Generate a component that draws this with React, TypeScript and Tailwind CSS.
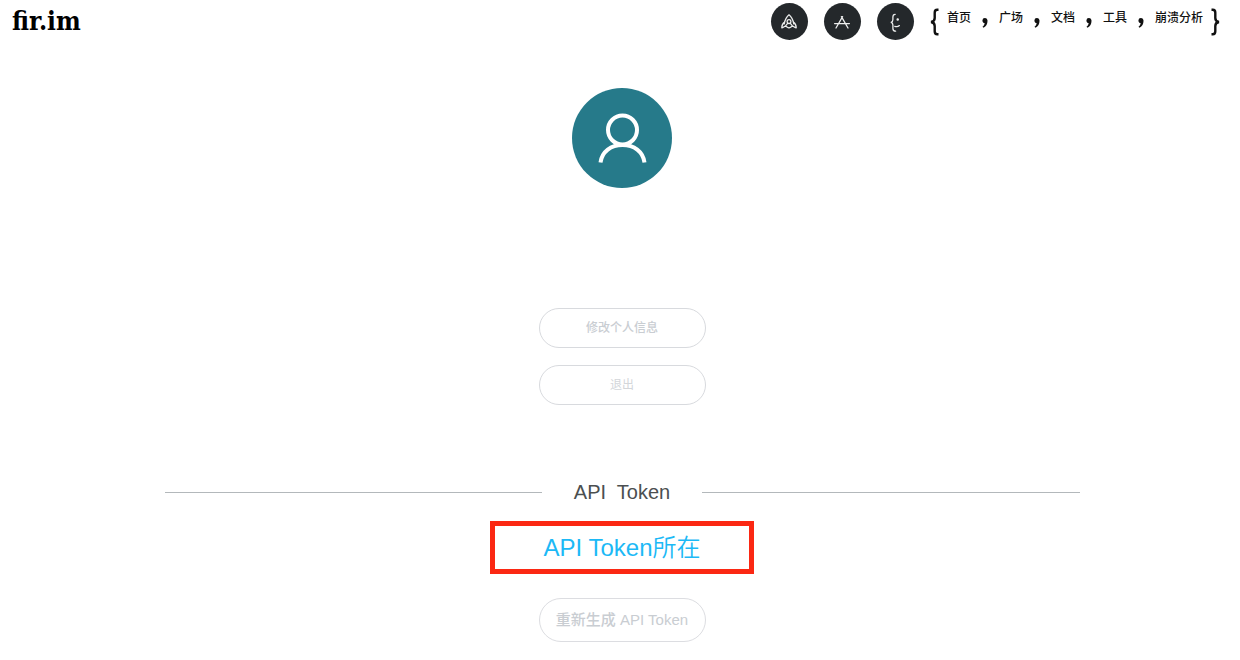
import { Fragment, type ReactNode } from "react";

const links = ["首页", "广场", "文档", "工具", "崩溃分析"];

function RoundLink({ label, children }: { label: string; children: ReactNode }) {
  return (
    <a
      href="#"
      aria-label={label}
      className="flex size-[37px] items-center justify-center rounded-full bg-[#24282b] text-[#eceded]"
    >
      <svg
        viewBox="0 0 20 20"
        className="size-5"
        fill="none"
        stroke="currentColor"
        strokeWidth="1.3"
        strokeLinecap="round"
        strokeLinejoin="round"
        aria-hidden="true"
      >
        {children}
      </svg>
    </a>
  );
}

function Brace({ flip = false }: { flip?: boolean }) {
  return (
    <svg viewBox="0 0 9 28" className="h-7 w-[9px]" fill="none" stroke="#111" strokeWidth="2.4" aria-hidden="true">
      {flip ? (
        <path d="M0.5 1.7H1.8Q4.3 1.7 4.3 4.7V10Q4.3 13.5 8 14Q4.3 14.5 4.3 18V23.3Q4.3 26.3 1.8 26.3H0.5" />
      ) : (
        <path d="M8.5 1.7H7.2Q4.7 1.7 4.7 4.7V10Q4.7 13.5 1 14Q4.7 14.5 4.7 18V23.3Q4.7 26.3 7.2 26.3H8.5" />
      )}
    </svg>
  );
}

function Comma() {
  return (
    <svg viewBox="0 0 6 10" className="mt-0.5 h-[10px] w-[6px]" fill="#111" aria-hidden="true">
      <path d="M0.4 2.4A2.5 2.4 0 0 1 5.5 2.7C5.6 5.8 4.3 8.4 1.5 9.8L0.5 8.8C1.9 7.8 2.6 6.6 2.6 5.1C1.3 5 0.4 3.8 0.4 2.4Z" />
    </svg>
  );
}

export default function App() {
  return (
    <div className="min-h-screen bg-white font-['Liberation_Sans','Noto_Sans_CJK_SC',sans-serif] text-[#111]">
      <header className="flex items-start justify-between pt-[3px] pr-5 pl-3">
        <a
          href="#"
          className="font-['DejaVu_Serif_Condensed','DejaVu_Serif',serif] text-[26px] leading-9 font-bold text-black"
        >
          fir.im
        </a>
        <div className="flex items-center gap-4">
          <div className="flex gap-4">
            <RoundLink label="发布">
              <path d="M5.2 11.8C6 8 7.4 4.8 10 2.8C12.6 4.8 14 8 14.8 11.8" />
              <circle cx="10" cy="9.6" r="1.9" />
              <path d="M5.4 10.4C3.6 11.6 2.8 13 2.8 15.8C4.2 15.8 5.2 14.2 6.4 14.2S8.6 15.8 10 15.8S12.4 14.2 13.6 14.2S15.8 15.8 17.2 15.8C17.2 13 16.4 11.6 14.6 10.4M6.4 14.2L8.6 11.4M13.6 14.2L11.4 11.4" />
            </RoundLink>
            <RoundLink label="应用">
              <path d="M4 16L10.6 4.6M9.4 4.6L16 16M2.6 11.6H17.4" />
            </RoundLink>
            <RoundLink label="分析">
              <path d="M10.2 2.3C8.4 2.3 7.9 3.3 7.9 5V7.5C7.9 9 7.4 9.9 6.2 10.3C7.4 10.7 7.9 11.6 7.9 13V16.4C7.9 18.3 8.7 19.2 10.6 19.2M9.8 14.3C11.4 14.9 13.2 14.6 14.4 13.6" />
              <circle cx="12.7" cy="7.4" r="0.6" fill="currentColor" />
            </RoundLink>
          </div>
          <nav className="flex items-center gap-2 text-xs font-medium">
            <Brace />
            <div className="flex items-center gap-[11px]">
              {links.map((link, index) => (
                <Fragment key={link}>
                  {index > 0 && <Comma />}
                  <a href="#" className="pb-2 leading-4">
                    {link}
                  </a>
                </Fragment>
              ))}
            </div>
            <Brace flip />
          </nav>
        </div>
      </header>

      <main className="flex flex-col items-center pt-12 pl-1">
        <div className="flex size-[100px] items-center justify-center rounded-full bg-[#267a8a]">
          <svg
            viewBox="0 0 100 100"
            className="size-full"
            fill="none"
            stroke="white"
            strokeWidth="4"
            role="img"
            aria-label="用户头像"
          >
            <circle cx="50.5" cy="42" r="14.5" />
            <path d="M28.5 74.5C30 63.5 39 57 50.5 57S71 63.5 72.5 74.5" />
          </svg>
        </div>

        <div className="flex flex-col gap-[17px] pt-30">
          <button type="button" className="h-10 w-[167px] rounded-full border border-[#d8dade] text-xs font-medium text-[#c9cdd2]">
            修改个人信息
          </button>
          <button type="button" className="h-10 w-[167px] rounded-full border border-[#d8dade] text-xs text-[#d3d6da]">
            退出
          </button>
        </div>

        <section className="flex w-full flex-col items-center pt-[71px]">
          <div className="flex w-full max-w-[915px] items-center gap-8">
            <div className="h-px flex-1 bg-[#b3b8bb]" />
            <h1 className="text-xl leading-8 whitespace-pre text-[#4b4f50]">API  Token</h1>
            <div className="h-px flex-1 bg-[#b3b8bb]" />
          </div>
          <output className="mt-[13px] flex h-[53px] w-[264px] items-center justify-center border-5 border-[#fb2813] text-2xl font-[350] text-[#1cb9f6]">
            API Token所在
          </output>
          <button type="button" className="mt-6 mb-4 h-11 w-[167px] rounded-full border border-[#dcdde1] text-[15px] font-medium text-[#c9cdd2]">
            重新生成 API Token
          </button>
        </section>
      </main>
    </div>
  );
}
